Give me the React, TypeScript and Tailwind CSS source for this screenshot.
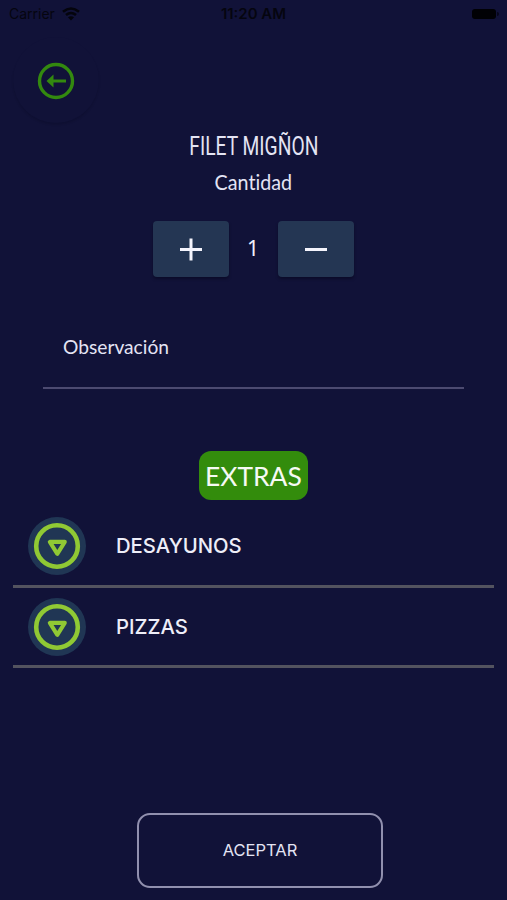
import React from "react";

function Category({ name }: { name: string }) {
  return (
    <div className="mx-[13px] flex h-[80.5px] items-start border-b-[3px] border-[#53535f]">
      <div className="ml-[15px] mt-[10px] h-[58px] w-[58px] rounded-full bg-[#203654]">
        <svg viewBox="0 0 58 58" className="h-full w-full" fill="none" stroke="#90c934">
          <circle cx="29" cy="29" r="20.8" strokeWidth="4.6" />
          <path d="M22.3 25.2h14L29.3 36.4z" strokeWidth="3.8" strokeLinejoin="round" transform="translate(29.3 30) scale(1.07) translate(-29.3 -30)" />
        </svg>
      </div>
      <span className="ml-[30px] mt-[23px] origin-left scale-x-[0.988] font-['Inter'] text-[20.5px] font-medium leading-[32px] text-[#eeeef8]">
        {name}
      </span>
    </div>
  );
}

export default function App() {
  return (
    <main className="flex h-[900px] w-[507px] flex-col overflow-hidden bg-[#111238] font-['Lato',sans-serif] text-[#e4e4f4]">
      <header className="grid h-[28px] shrink-0 grid-cols-3 items-center font-['Inter',sans-serif] text-[14px] text-[#05050f]">
        <div className="flex items-center gap-[7px] pl-[9px]">
          <span className="leading-[28px]">Carrier</span>
          <svg width="18" height="14" viewBox="0 0 18 14" fill="none" stroke="#04040c" strokeWidth="2.6">
            <path d="M1 4.8Q9-1.8 17 4.8M4 8Q9 4 14 8" />
            <path d="M9 13.5 5.9 10.3Q9 8 12.1 10.3z" fill="#04040c" stroke="none" />
          </svg>
        </div>
        <span className="scale-x-[1.07] text-center font-semibold leading-[26px]">11:20 AM</span>
        <div className="flex items-center justify-end gap-px pr-[8px]">
          <i className="h-[10px] w-[24px] rounded-[3px] bg-[#010105]" />
          <i className="h-[4px] w-[2px] rounded-r bg-[#06061a]" />
        </div>
      </header>

      <div className="h-[102px] shrink-0 pl-[13px] pt-[9px]">
        <button className="flex h-[86px] w-[86px] items-center justify-center rounded-full bg-[#111238] pt-px shadow-[0_2px_2px_rgba(0,0,20,0.15)]">
          <svg width="38" height="38" viewBox="0 0 38 38" fill="none" stroke="#33890f">
            <circle cx="19" cy="19" r="16.5" strokeWidth="3.4" />
            <path d="M16 19h13" strokeWidth="3" />
            <path d="M9.5 19 16.5 12.5v13z" fill="#33890f" stroke="none" />
          </svg>
        </button>
      </div>

      <section className="flex h-[172px] shrink-0 flex-col items-center">
        <h1 className="origin-center scale-x-[0.77] whitespace-nowrap font-['Roboto',sans-serif] text-[25px] font-normal leading-[34px]">
          FILET MIGÑON
        </h1>
        <p className="mt-[2px] origin-center scale-x-[0.96] text-[20.5px] leading-[32px] [font-variant-ligatures:none]">Cantidad</p>
        <div className="mr-px mt-[23px] flex">
          <button className="flex h-[56px] w-[76px] items-center justify-center rounded-[4px] bg-[#243653] shadow-[0_2px_3px_rgba(0,0,20,0.4)]">
            <svg width="24" height="24" viewBox="0 0 24 24" stroke="#f4f4fc" strokeWidth="3">
              <path d="M1 12.5h22M12 1.5v22" />
            </svg>
          </button>
          <span className="w-[49px] text-center font-['Noto_Sans',sans-serif] text-[21px] leading-[54px] text-[#f0f0fa]">
            1
          </span>
          <button className="flex h-[56px] w-[76px] items-center justify-center rounded-[4px] bg-[#243653] shadow-[0_2px_3px_rgba(0,0,20,0.4)]">
            <svg width="24" height="24" viewBox="0 0 24 24" stroke="#f4f4fc" strokeWidth="3">
              <path d="M1 12.5h22" />
            </svg>
          </button>
        </div>
      </section>

      <div className="mx-[43px] h-[87px] shrink-0 border-b-2 border-[#4c4a70] pl-[20px] pt-[28px]">
        <span className="inline-block origin-left scale-x-[0.96] text-[20px] leading-[32px]">Observación</span>
      </div>

      <h2 className="mx-auto mt-[62px] flex h-[49px] w-[109px] shrink-0 items-center justify-center rounded-[12px] bg-[#338c0c] text-[27.5px] text-[#f6faf4]">
        <span className="scale-x-[0.96]">EXTRAS</span>
      </h2>

      <section className="mt-[7px] shrink-0">
        <Category name="DESAYUNOS" />
        <Category name="PIZZAS" />
      </section>

      <button className="ml-[137px] mt-[145px] flex h-[75px] w-[246px] shrink-0 items-center justify-center rounded-[13px] border-2 border-[#9190ae] font-['Inter',sans-serif] text-[16.5px]">
        ACEPTAR
      </button>
    </main>
  );
}
